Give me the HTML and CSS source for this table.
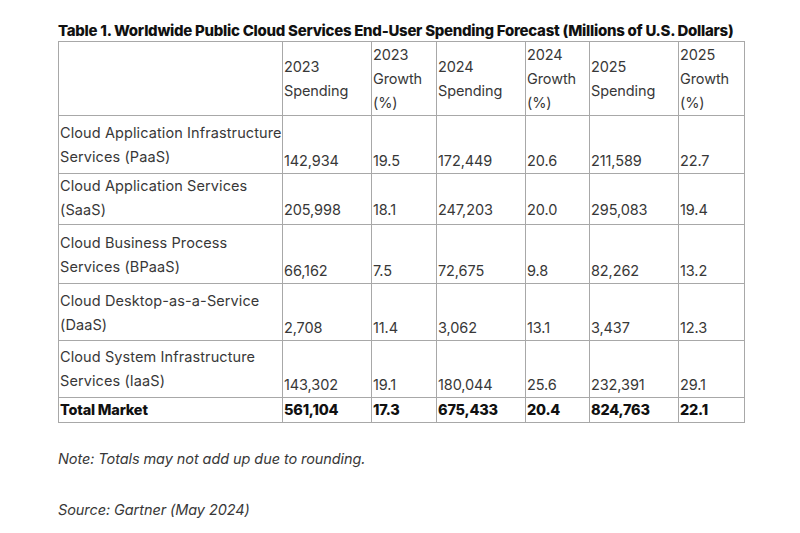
FILE: index.html
```html
<!DOCTYPE html>
<html>
<head>
<meta charset="utf-8">
<link rel="stylesheet" href="styles.css">
</head>
<body>
<div class="page">
  <h1 class="title">Table 1. Worldwide Public Cloud Services End-User Spending Forecast (Millions of U.S. Dollars)</h1>
  <table class="data">
    <colgroup>
      <col class="c-label"><col class="c-sp"><col class="c-gr"><col class="c-sp"><col class="c-gr2"><col class="c-sp"><col class="c-gr3">
    </colgroup>
    <thead>
      <tr class="head">
        <th></th>
        <th>2023<br>Spending</th>
        <th>2023<br>Growth<br>(%)</th>
        <th>2024<br>Spending</th>
        <th>2024<br>Growth<br>(%)</th>
        <th>2025<br>Spending</th>
        <th>2025<br>Growth<br>(%)</th>
      </tr>
    </thead>
    <tbody>
      <tr class="row r1">
        <td class="label">Cloud Application Infrastructure Services (PaaS)</td>
        <td>142,934</td><td>19.5</td><td>172,449</td><td>20.6</td><td>211,589</td><td>22.7</td>
      </tr>
      <tr class="row r2">
        <td class="label">Cloud Application Services (SaaS)</td>
        <td>205,998</td><td>18.1</td><td>247,203</td><td>20.0</td><td>295,083</td><td>19.4</td>
      </tr>
      <tr class="row r3">
        <td class="label">Cloud Business Process Services (BPaaS)</td>
        <td>66,162</td><td>7.5</td><td>72,675</td><td>9.8</td><td>82,262</td><td>13.2</td>
      </tr>
      <tr class="row r4">
        <td class="label">Cloud Desktop-as-a-Service (DaaS)</td>
        <td>2,708</td><td>11.4</td><td>3,062</td><td>13.1</td><td>3,437</td><td>12.3</td>
      </tr>
      <tr class="row r5">
        <td class="label">Cloud System Infrastructure Services (IaaS)</td>
        <td>143,302</td><td>19.1</td><td>180,044</td><td>25.6</td><td>232,391</td><td>29.1</td>
      </tr>
      <tr class="total">
        <td>Total Market</td>
        <td>561,104</td><td>17.3</td><td>675,433</td><td>20.4</td><td>824,763</td><td>22.1</td>
      </tr>
    </tbody>
  </table>
  <p class="note">Note: Totals may not add up due to rounding.</p>
  <p class="note source">Source: Gartner (May 2024)</p>
</div>
</body>
</html>
```

FILE: styles.css
```css
html, body {
  margin: 0;
  padding: 0;
  background: #ffffff;
}
.page {
  padding: 21px 0 0 58px;
  font-family: Inter, "Noto Sans", sans-serif;
  color: #383838;
}
.title {
  margin: 0;
  font-size: 15px;
  line-height: 20px;
  font-weight: 800;
  color: #111;
  letter-spacing: -0.28px;
  white-space: nowrap;
}
.data {
  border-collapse: collapse;
  table-layout: fixed;
  width: 686px;
  font-size: 14.5px;
  letter-spacing: 0.1px;
  line-height: 24px;
}
.c-label { width: 224px; }
.c-sp { width: 89px; }
.c-gr { width: 65px; }
.c-gr2 { width: 64px; }
.c-gr3 { width: 66px; }
.data th, .data td {
  border: 1px solid #a8a8a8;
  padding: 0 0 0 1px;
  text-align: left;
  font-weight: 400;
  vertical-align: bottom;
  letter-spacing: -0.1px;
}
.data td.label { letter-spacing: 0.1px; }
.head { height: 74px; }
.head th { vertical-align: middle; }
.row td.label { vertical-align: top; padding-top: 5px; }
.r1 { height: 58px; }
.r2 { height: 48px; }
.r2 td { padding-bottom: 2px; }
.r2 td.label { padding-top: 0; }
.r3 { height: 59px; }
.r3 td.label { padding-top: 6px; }
.r4 { height: 57px; }
.r5 { height: 57px; }
.r5 td.label { padding-top: 4px; }
.total { height: 24px; }
.total td {
  font-weight: 800;
  color: #111;
  letter-spacing: -0.2px;
}
.note {
  margin: 24px 0 0 0;
  font-style: italic;
  font-size: 14.5px;
  letter-spacing: -0.08px;
  line-height: 24px;
  color: #383838;
}
.source { margin-top: 27px; }
```
